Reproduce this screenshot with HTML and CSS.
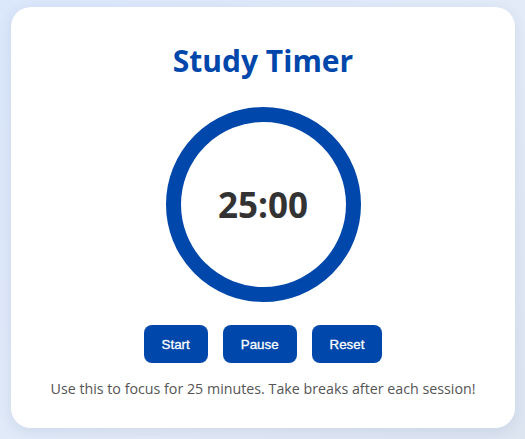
FILE: index.html
```html
<!DOCTYPE html>
<html lang="en">
<head>
<meta charset="utf-8">
<title>Study Timer</title>
<link rel="stylesheet" href="styles.css">
</head>
<body>
<main class="card">
  <h1 class="title">Study Timer</h1>
  <div class="ring"><span class="time">25:00</span></div>
  <div class="controls">
    <button class="btn">Start</button>
    <button class="btn">Pause</button>
    <button class="btn">Reset</button>
  </div>
  <p class="note">Use this to focus for 25 minutes. Take breaks after each session!</p>
</main>
</body>
</html>
```
FILE: styles.css
```css
html, body {
  margin: 0;
  height: 100%;
}
body {
  background: linear-gradient(135deg, #dbe7fb 0%, #e3ebf7 60%, #dde5f1 100%);
  padding: 7px 10px 11px 11px;
  box-sizing: border-box;
  font-family: "Open Sans", "Noto Sans", sans-serif;
}
.card {
  width: 504px;
  height: 421px;
  box-sizing: border-box;
  background: #fff;
  border-radius: 20px;
  box-shadow: 0 4px 14px rgba(60, 90, 150, 0.12);
  display: flex;
  flex-direction: column;
  align-items: center;
  padding-top: 34px;
}
.title {
  margin: 0;
  font-size: 30px;
  line-height: 40px;
  font-weight: 700;
  color: #0047ab;
}
.ring {
  margin-top: 26px;
  width: 165px;
  height: 165px;
  border: 15px solid #0047ab;
  border-radius: 50%;
  display: flex;
  align-items: center;
  justify-content: center;
}
.time {
  font-size: 35px;
  font-weight: 700;
  color: #333;
  line-height: 40px;
}
.controls {
  margin-top: 23px;
  display: flex;
  gap: 15px;
}
.btn {
  height: 38px;
  padding: 0 18px;
  border: 0;
  border-radius: 8px;
  background: #0047ab;
  color: #fff;
  font-family: "Liberation Sans", Arial, sans-serif;
  font-size: 13.33px;
  font-weight: 400;
  -webkit-text-stroke: 0.3px #fff;
}
.note {
  margin: 16px 0 0;
  font-size: 14.25px;
  line-height: 20px;
  color: #555;
}
```
